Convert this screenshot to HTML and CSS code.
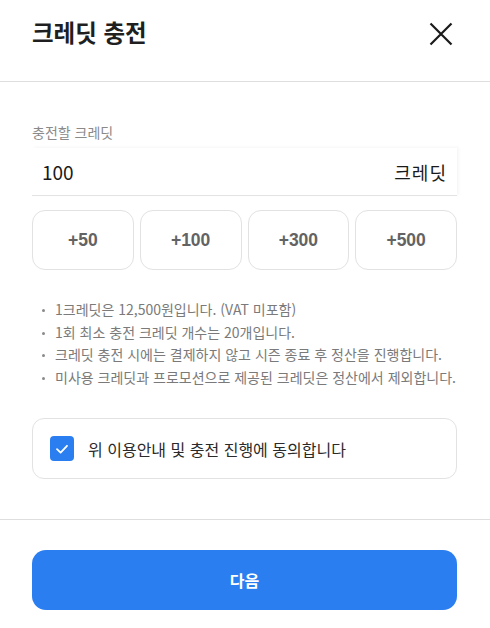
FILE: index.html
```html
<!DOCTYPE html>
<html lang="ko">
<head>
  <meta charset="UTF-8" />
  <title>크레딧 충전</title>
  <link rel="stylesheet" href="styles.css">
</head>
<body>
  <div class="modal">
    <div class="modal-header">
      <h2>크레딧 충전</h2>
      <button class="close-btn" aria-label="닫기">
        <svg width="24" height="24" viewBox="0 0 24 24">
          <path d="M1.5 1.5 L22.5 22.5 M22.5 1.5 L1.5 22.5" stroke="#1a1a1a" stroke-width="2.2" fill="none" />
        </svg>
      </button>
    </div>

    <div class="modal-body">
      <label class="field-label" for="amount">충전할 크레딧</label>
      <div class="amount-input">
        <input id="amount" type="text" value="100" />
        <span class="unit">크레딧</span>
      </div>

      <div class="quick-btns">
        <button>+50</button>
        <button>+100</button>
        <button>+300</button>
        <button>+500</button>
      </div>

      <ul class="notes">
        <li>1크레딧은 12,500원입니다. (VAT 미포함)</li>
        <li>1회 최소 충전 크레딧 개수는 20개입니다.</li>
        <li>크레딧 충전 시에는 결제하지 않고 시즌 종료 후 정산을 진행합니다.</li>
        <li>미사용 크레딧과 프로모션으로 제공된 크레딧은 정산에서 제외합니다.</li>
      </ul>

      <label class="agree-box">
        <span class="checkbox">
          <svg width="14" height="14" viewBox="0 0 14 14">
            <path d="M2 7.2 L5.6 10.6 L12 3.8" stroke="#fff" stroke-width="1.8" fill="none" stroke-linecap="round" stroke-linejoin="round" />
          </svg>
        </span>
        <span>위 이용안내 및 충전 진행에 동의합니다</span>
      </label>
    </div>

    <div class="modal-footer">
      <button class="next-btn">다음</button>
    </div>
  </div>
</body>
</html>
```

FILE: styles.css
```css
body {
  margin: 0;
  padding: 0;
  font-family: "Noto Sans CJK KR", "Noto Sans", sans-serif;
  background: #fff;
  color: #1f1f1f;
}

.modal {
  width: 490px;
}

.modal-header {
  display: flex;
  justify-content: space-between;
  align-items: center;
  height: 82px;
  padding: 0 37px 0 32px;
  border-bottom: 1px solid #dedede;
  box-sizing: border-box;
}

.modal-header h2 {
  margin: 0;
  font-size: 23.5px;
  font-weight: 700;
  color: #1f1f1f;
  position: relative;
  top: -9px;
}

.close-btn {
  border: none;
  background: none;
  padding: 0;
  cursor: pointer;
  display: flex;
  position: relative;
  top: -7px;
}

.modal-body {
  padding: 40px 33px 40px 32px;
  border-bottom: 1px solid #dedede;
}

.field-label {
  display: block;
  font-size: 14px;
  color: #8a8a8a;
  line-height: 20px;
}

.amount-input {
  display: flex;
  align-items: center;
  height: 47px;
  margin-top: 6px;
  padding: 0 10px 0 10px;
  border-bottom: 1px solid #e3e3e3;
  box-shadow: 2px -1px 3px rgba(0, 0, 0, 0.04);
}

.amount-input input {
  flex: 1;
  border: none;
  outline: none;
  font-family: inherit;
  font-size: 19px;
  color: #1a1a1a;
  padding: 0;
  background: transparent;
}

.unit {
  font-size: 18px;
  letter-spacing: 1px;
  color: #1a1a1a;
}

.quick-btns {
  display: grid;
  grid-template-columns: repeat(4, 1fr);
  gap: 6px;
  margin-top: 14px;
}

.quick-btns button {
  height: 60px;
  background: #fff;
  border: 1px solid #e2e2e2;
  border-radius: 13px;
  font-family: "Liberation Sans", Arial, sans-serif;
  font-size: 17.5px;
  font-weight: 700;
  color: #636363;
  cursor: pointer;
}

.notes {
  list-style: none;
  margin: 28px 0 0;
  padding: 0 0 0 10px;
  font-size: 14px;
  line-height: 22.5px;
  color: #7a7a7a;
}

.notes li {
  position: relative;
  padding-left: 13px;
}

.notes li::before {
  content: "";
  position: absolute;
  left: 0;
  top: 11px;
  width: 3px;
  height: 3px;
  border-radius: 50%;
  background: #8a8a8a;
}

.agree-box {
  display: flex;
  align-items: center;
  gap: 14px;
  height: 61px;
  margin-top: 30px;
  padding: 0 17px;
  border: 1px solid #e2e2e2;
  border-radius: 12px;
  box-sizing: border-box;
  font-size: 16px;
  color: #2a2a2a;
  cursor: pointer;
}

.checkbox {
  display: flex;
  align-items: center;
  justify-content: center;
  width: 24px;
  height: 25px;
  border-radius: 4px;
  background: #2a7ef0;
}

.modal-footer {
  padding: 30px 33px 20px 32px;
}

.next-btn {
  width: 100%;
  height: 60px;
  border: none;
  border-radius: 14px;
  background: #2a7ef0;
  color: #fff;
  font-family: inherit;
  font-size: 16px;
  font-weight: 700;
  cursor: pointer;
}
```
